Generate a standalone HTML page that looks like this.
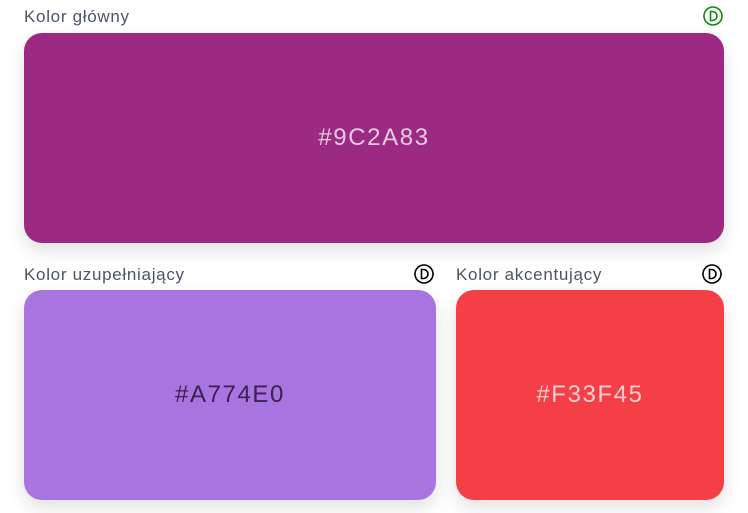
<!DOCTYPE html>
<html><head><style>
body{margin:0;width:748px;height:513px;background:#fff;font-family:"Liberation Sans",sans-serif;position:relative;overflow:hidden}
.l{position:absolute;font-size:17px;letter-spacing:0.7px;color:#4b5563;line-height:20px}
.b{position:absolute;border-radius:18px;display:flex;align-items:center;justify-content:center;font-size:24px;letter-spacing:1.6px;box-shadow:0 8px 18px rgba(0,0,0,0.12)}
svg{position:absolute}
</style></head><body>
<div class="l" style="left:24px;top:7px">Kolor główny</div>
<svg style="left:702px;top:5px" width="22" height="22" viewBox="0 0 22 22"><circle cx="11" cy="11" r="9" fill="none" stroke="#0a8a0a" stroke-width="1.6"/><path d="M8.5 6.5h2a4.5 4.5 0 0 1 0 9h-2z" fill="none" stroke="#0a8a0a" stroke-width="1.6"/></svg>
<div class="b" style="left:24px;top:33px;width:700px;height:210px;background:#9c2a83;color:rgba(255,255,255,0.75)">#9C2A83</div>
<div class="l" style="left:24px;top:265px">Kolor uzupełniający</div>
<svg style="left:413px;top:263px" width="22" height="22" viewBox="0 0 22 22"><circle cx="11" cy="11" r="9" fill="none" stroke="#000" stroke-width="1.6"/><path d="M8.5 6.5h2a4.5 4.5 0 0 1 0 9h-2z" fill="none" stroke="#000" stroke-width="1.6"/></svg>
<div class="b" style="left:24px;top:290px;width:412px;height:210px;background:#a774e0;color:#3a2150">#A774E0</div>
<div class="l" style="left:456px;top:265px">Kolor akcentujący</div>
<svg style="left:701px;top:263px" width="22" height="22" viewBox="0 0 22 22"><circle cx="11" cy="11" r="9" fill="none" stroke="#000" stroke-width="1.6"/><path d="M8.5 6.5h2a4.5 4.5 0 0 1 0 9h-2z" fill="none" stroke="#000" stroke-width="1.6"/></svg>
<div class="b" style="left:456px;top:290px;width:268px;height:210px;background:#f33f45;color:rgba(255,255,255,0.75)">#F33F45</div>
</body></html>
